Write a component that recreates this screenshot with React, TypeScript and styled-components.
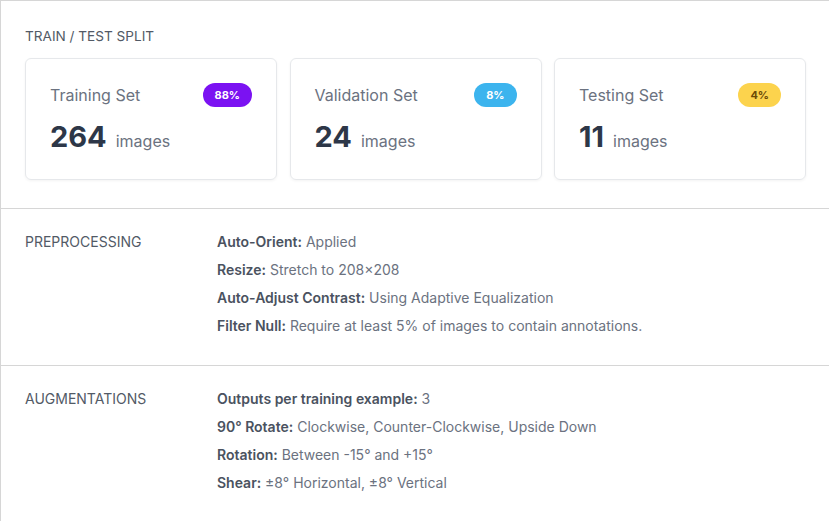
import React from "react";
import styled, { createGlobalStyle } from "styled-components";

const Global = createGlobalStyle`
  html, body { margin: 0; padding: 0; background: #ffffff; }
  body { font-family: Inter, "Noto Sans", "Liberation Sans", sans-serif; -webkit-font-smoothing: antialiased; }
`;

const Page = styled.div`
  width: 830px;
  border-top: 1px solid #d6d6d6;
  border-left: 1px solid #d6d6d6;
  box-sizing: border-box;
  background: #fff;
`;

const Section = styled.section<{ $divider?: boolean }>`
  border-top: ${(p) => (p.$divider ? "1px solid #d6d6d6" : "none")};
`;

const SplitSection = styled(Section)`
  padding: 26px 24px 28px 24px;
`;

const SectionTitle = styled.div`
  font-size: 13.6px;
  line-height: 18px;
  color: #525a66;
  text-transform: uppercase;
  margin-bottom: 13px;
`;

const Cards = styled.div`
  display: grid;
  grid-template-columns: repeat(3, 1fr);
  gap: 12.5px;
`;

const Card = styled.div`
  border: 1px solid #e6e8eb;
  border-radius: 6px;
  box-shadow: 0 1px 3px rgba(0, 0, 0, 0.05);
  padding: 24px 24px 21px 24px;
  display: flex;
  flex-direction: column;
  gap: 13px;
`;

const CardHead = styled.div`
  display: flex;
  align-items: center;
  justify-content: space-between;
  height: 24px;
`;

const CardName = styled.span`
  font-size: 16px;
  color: #6b7280;
`;

const Badge = styled.span<{ $bg: string; $fg: string }>`
  display: inline-flex;
  align-items: center;
  justify-content: center;
  height: 24px;
  padding: 0 12px;
  border-radius: 12px;
  background: ${(p) => p.$bg};
  color: ${(p) => p.$fg};
  font-size: 11px;
  font-weight: 700;
`;

const CountRow = styled.div`
  display: flex;
  align-items: baseline;
  gap: 9px;
  line-height: 34px;
`;

const Count = styled.span`
  font-size: 29px;
  font-weight: 700;
  color: #2d3748;
`;

const Unit = styled.span`
  font-size: 16px;
  color: #6b7280;
`;

const InfoSection = styled(Section)`
  display: grid;
  grid-template-columns: 192px 1fr;
  padding: 19px 24px 25px 24px;
`;

const InfoLabel = styled.div`
  font-size: 14px;
  line-height: 28px;
  color: #525a66;
  text-transform: uppercase;
`;

const InfoList = styled.div`
  display: flex;
  flex-direction: column;
`;

const InfoLine = styled.div`
  font-size: 14px;
  line-height: 28px;
  color: #6b7280;
`;

const Key = styled.b`
  font-weight: 600;
  color: #4a5260;
`;

const splits = [
  { name: "Training Set", pct: "88%", count: 264, bg: "#7b12f2", fg: "#ffffff" },
  { name: "Validation Set", pct: "8%", count: 24, bg: "#3cb4ee", fg: "#ffffff" },
  { name: "Testing Set", pct: "4%", count: 11, bg: "#fcd34d", fg: "#6b4a06" },
];

const preprocessing: [string, string][] = [
  ["Auto-Orient:", "Applied"],
  ["Resize:", "Stretch to 208×208"],
  ["Auto-Adjust Contrast:", "Using Adaptive Equalization"],
  ["Filter Null:", "Require at least 5% of images to contain annotations."],
];

const augmentations: [string, string][] = [
  ["Outputs per training example:", "3"],
  ["90° Rotate:", "Clockwise, Counter-Clockwise, Upside Down"],
  ["Rotation:", "Between -15° and +15°"],
  ["Shear:", "±8° Horizontal, ±8° Vertical"],
];

const Info = ({ label, rows }: { label: string; rows: [string, string][] }) => (
  <InfoSection $divider>
    <InfoLabel>{label}</InfoLabel>
    <InfoList>
      {rows.map(([k, v]) => (
        <InfoLine key={k}>
          <Key>{k}</Key> {v}
        </InfoLine>
      ))}
    </InfoList>
  </InfoSection>
);

export default function App() {
  return (
    <>
      <Global />
      <Page>
        <SplitSection>
          <SectionTitle>Train / Test Split</SectionTitle>
          <Cards>
            {splits.map((s) => (
              <Card key={s.name}>
                <CardHead>
                  <CardName>{s.name}</CardName>
                  <Badge $bg={s.bg} $fg={s.fg}>{s.pct}</Badge>
                </CardHead>
                <CountRow>
                  <Count>{s.count}</Count>
                  <Unit>images</Unit>
                </CountRow>
              </Card>
            ))}
          </Cards>
        </SplitSection>
        <Info label="Preprocessing" rows={preprocessing} />
        <Info label="Augmentations" rows={augmentations} />
      </Page>
    </>
  );
}
